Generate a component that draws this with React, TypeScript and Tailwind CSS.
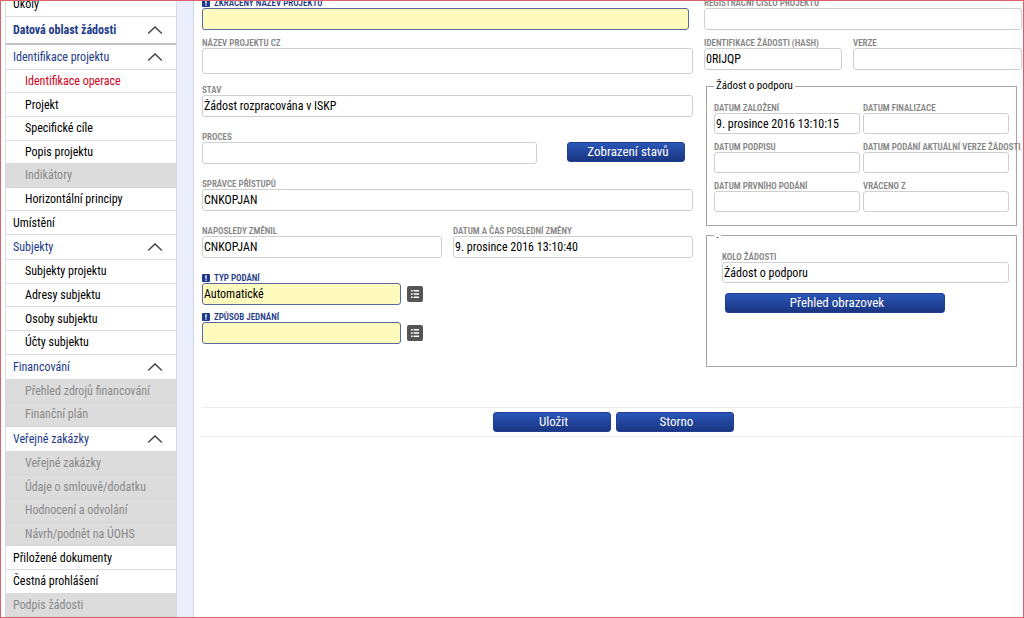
import { useState } from 'react';
import clsx from 'clsx';

interface MenuItem {
  label: string;
  kind?: 'sub' | 'group' | 'section';
  disabled?: boolean;
  active?: boolean;
}

interface FieldProps {
  id: string;
  label: string;
  value?: string;
  required?: boolean;
  className?: string;
  inputClassName?: string;
}

const menu: MenuItem[] = [
  { label: 'Úkoly' },
  { label: 'Datová oblast žádosti', kind: 'section' },
  { label: 'Identifikace projektu', kind: 'group' },
  { label: 'Identifikace operace', kind: 'sub', active: true },
  { label: 'Projekt', kind: 'sub' },
  { label: 'Specifické cíle', kind: 'sub' },
  { label: 'Popis projektu', kind: 'sub' },
  { label: 'Indikátory', kind: 'sub', disabled: true },
  { label: 'Horizontální principy', kind: 'sub' },
  { label: 'Umístění' },
  { label: 'Subjekty', kind: 'group' },
  { label: 'Subjekty projektu', kind: 'sub' },
  { label: 'Adresy subjektu', kind: 'sub' },
  { label: 'Osoby subjektu', kind: 'sub' },
  { label: 'Účty subjektu', kind: 'sub' },
  { label: 'Financování', kind: 'group' },
  { label: 'Přehled zdrojů financování', kind: 'sub', disabled: true },
  { label: 'Finanční plán', kind: 'sub', disabled: true },
  { label: 'Veřejné zakázky', kind: 'group' },
  { label: 'Veřejné zakázky', kind: 'sub', disabled: true },
  { label: 'Údaje o smlouvě/dodatku', kind: 'sub', disabled: true },
  { label: 'Hodnocení a odvolání', kind: 'sub', disabled: true },
  { label: 'Návrh/podnět na ÚOHS', kind: 'sub', disabled: true },
  { label: 'Přiložené dokumenty' },
  { label: 'Čestná prohlášení' },
  { label: 'Podpis žádosti', disabled: true },
];

const Chevron = () => (
  <svg className="h-2 w-4" viewBox="0 0 16 8" fill="none" stroke="#444" strokeWidth="1.4" aria-hidden="true">
    <path d="M1.2 7.4 8 .9l6.8 6.5" />
  </svg>
);

const MenuRow = ({ item }: { item: MenuItem }) => {
  if (item.kind === 'group' || item.kind === 'section') {
    const section = item.kind === 'section';
    return (
      <button
        type="button"
        className={clsx(
          'flex shrink-0 items-center justify-between pr-[13px] pl-[7px] text-left text-[#1d3a8a]',
          section ? 'h-7 border-b-2 border-[#c4c4c4] font-bold' : 'h-[25px] border-b border-[#dcdcdc]'
        )}
      >
        {item.label}
        <Chevron />
      </button>
    );
  }
  return (
    <a
      href="#"
      aria-disabled={item.disabled}
      className={clsx(
        'flex min-h-5 flex-1 items-center border-b',
        item.kind === 'sub' ? 'pl-[19px]' : 'pl-[7px]',
        item.disabled ? 'border-[#d6d6d6] bg-[#dcdcdc] text-[#8a8a8a]' : 'border-[#dcdcdc]',
        item.active && 'text-[#d0021b]'
      )}
    >
      {item.label}
    </a>
  );
};

const RequiredIcon = () => (
  <svg className="h-2 w-2" viewBox="0 0 8 8" aria-hidden="true">
    <rect width="8" height="8" rx="1" fill="#1d3a8a" />
    <path d="M4 1.2v3.6M4 5.6v1.2" stroke="#fff" strokeWidth="1.4" />
  </svg>
);

const Field = ({ id, label, value = '', required, className, inputClassName = 'h-[22px]' }: FieldProps) => {
  const [text, setText] = useState(value);
  return (
    <div className={clsx('flex min-w-0 flex-col', className)}>
      <label
        htmlFor={id}
        className={clsx(
          'flex h-2.5 items-center gap-1 text-[9px] leading-[10px] font-semibold whitespace-nowrap uppercase',
          required ? 'text-[#1d3a8a]' : 'text-[#858585]'
        )}
      >
        {required && <RequiredIcon />}
        {label}
      </label>
      <input
        id={id}
        value={text}
        onChange={(e) => setText(e.target.value)}
        className={clsx(
          'w-full min-w-0 rounded-[3px] border px-px',
          required ? 'border-[#5a6a9c] bg-[#fffabe]' : 'border-[#cfcfcf] bg-white',
          inputClassName
        )}
      />
    </div>
  );
};

const ListButton = ({ label }: { label: string }) => (
  <button type="button" aria-label={label} className="mb-[3px] h-4 w-4 rounded-[2px] bg-[#555]">
    <svg viewBox="0 0 16 16" className="h-4 w-4" stroke="#fff" strokeWidth="1.4" aria-hidden="true">
      <path d="M4 4.7h1.6M6.6 4.7H12M4 8h1.6M6.6 8H12M4 11.3h1.6M6.6 11.3H12" />
    </svg>
  </button>
);

const ActionButton = ({ label, className }: { label: string; className: string }) => (
  <button
    type="button"
    className={clsx(
      'h-5 rounded-[3px] border border-[#1f3f92] bg-linear-to-b from-[#2a55b8] to-[#1a3682] pl-1 text-[13px] leading-4 text-white',
      className
    )}
  >
    {label}
  </button>
);

const App: React.FC = () => {
  return (
    <div className="flex h-screen min-h-[560px] overflow-hidden border border-[#d9626c] bg-white font-['Roboto_Condensed','Roboto',sans-serif] text-[12px] leading-4 text-black">
      <nav className="-mt-2 ml-1 flex w-[172px] shrink-0 flex-col border-x border-[#dcdcdc]">
        {menu.map((item, index) => (
          <MenuRow key={index} item={item} />
        ))}
      </nav>
      <div className="w-4 shrink-0 bg-[#e9edfc]" />
      <main className="-mt-[3px] min-w-0 flex-1 border-l border-[#d5d8e2] pr-px pl-2">
        <div className="grid grid-cols-[491fr_318fr] gap-[11px]">
          <div>
            <Field id="short-name" label="Zkrácený název projektu" required className="mr-1" />
            <Field id="name-cz" label="Název projektu CZ" className="mt-2" inputClassName="h-[26px]" />
            <Field id="state" label="Stav" value="Žádost rozpracována v ISKP" className="mt-[11px]" />
            <div className="mt-[15px] flex items-end">
              <Field id="process" label="Proces" className="flex-1" />
              <ActionButton label="Zobrazení stavů" className="mr-2 mb-0.5 ml-[30px] w-[118px]" />
            </div>
            <Field id="access-admin" label="Správce přístupů" value="CNKOPJAN" className="mt-[15px]" />
            <div className="mt-[15px] grid grid-cols-2 gap-[11px]">
              <Field id="changed-by" label="Naposledy změnil" value="CNKOPJAN" />
              <Field id="changed-at" label="Datum a čas poslední změny" value="9. prosince 2016 13:10:40" />
            </div>
            <div className="mt-[15px] flex items-end gap-1.5">
              <Field id="submit-type" label="Typ podání" value="Automatické" required className="w-[199px]" />
              <ListButton label="Vybrat typ podání" />
            </div>
            <div className="mt-[7px] flex items-end gap-1.5">
              <Field id="acting" label="Způsob jednání" required className="w-[199px]" />
              <ListButton label="Vybrat způsob jednání" />
            </div>
          </div>

          <div>
            <Field id="reg-number" label="Registrační číslo projektu" />
            <div className="mt-2 grid grid-cols-[138fr_169fr] gap-[11px]">
              <Field id="hash" label="Identifikace žádosti (Hash)" value="0RIJQP" />
              <Field id="version" label="Verze" />
            </div>
            <fieldset className="mt-2 mr-[5px] ml-0.5 h-[148px] border border-[#a5a5a5] px-[7px]">
              <legend className="px-0.5 text-[11px]">Žádost o podporu</legend>
              <div className="mt-[9px] grid grid-cols-2 gap-x-[3px] gap-y-2">
                <Field id="created" label="Datum založení" value="9. prosince 2016 13:10:15" inputClassName="h-[21px]" />
                <Field id="finalized" label="Datum finalizace" inputClassName="h-[21px]" />
                <Field id="signed" label="Datum podpisu" inputClassName="h-[21px]" />
                <Field id="submitted" label="Datum podání aktuální verze žádosti" inputClassName="h-[21px]" />
                <Field id="first-submitted" label="Datum prvního podání" inputClassName="h-[21px]" />
                <Field id="returned" label="Vráceno z" inputClassName="h-[21px]" />
              </div>
            </fieldset>
            <fieldset className="mt-[1px] mr-[5px] ml-0.5 h-[140px] border border-[#a5a5a5] pr-[7px] pl-[15px]">
              <legend className="-ml-2 px-0.5 text-[11px]">.</legend>
              <Field id="round" label="Kolo žádosti" value="Žádost o podporu" className="mt-[9px]" inputClassName="h-[21px]" />
              <ActionButton label="Přehled obrazovek" className="mt-2.5 ml-[3px] w-[220px]" />
            </fieldset>
          </div>
        </div>
        <div className="mt-10 flex justify-center gap-[5px] border-y border-[#ececec] py-1 pl-0.5">
          <ActionButton label="Uložit" className="w-[118px]" />
          <ActionButton label="Storno" className="w-[118px]" />
        </div>
      </main>
    </div>
  );
};

export default App;
